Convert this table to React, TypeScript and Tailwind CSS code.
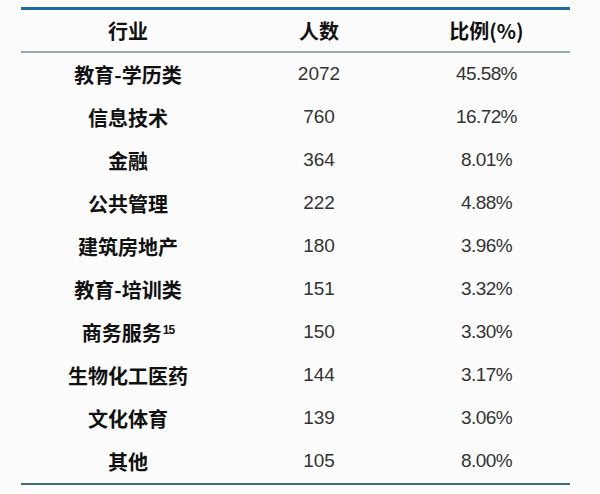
import React from "react";

const rows: [React.ReactNode, string, string][] = [
  ["教育-学历类", "2072", "45.58%"],
  ["信息技术", "760", "16.72%"],
  ["金融", "364", "8.01%"],
  ["公共管理", "222", "4.88%"],
  ["建筑房地产", "180", "3.96%"],
  ["教育-培训类", "151", "3.32%"],
  [
    <span>
      商务服务<sup className="text-[12px] font-bold relative -top-[7px] ml-[1px] tracking-[-1px]" style={{ fontFamily: '"Liberation Sans", sans-serif' }}>15</sup>
    </span>,
    "150",
    "3.30%",
  ],
  ["生物化工医药", "144", "3.17%"],
  ["文化体育", "139", "3.06%"],
  ["其他", "105", "8.00%"],
];

export default function App() {
  return (
    <div className="w-[600px] h-[494px] bg-[#fdfcfd] pt-[7px]" style={{ fontFamily: '"Noto Sans CJK SC", "Liberation Sans", sans-serif' }}>
      <div className="ml-[21px] w-[549px]">
        <div className="h-[3px] bg-[#1d6b9b]" />
        <div className="grid grid-cols-[214px_168px_167px] h-[41px] items-center text-[20px] font-bold text-[#111]">
          <div className="text-center">行业</div>
          <div className="text-center">人数</div>
          <div className="text-center">比例(%)</div>
        </div>
        <div className="h-[2px] bg-[#8fabb0]" />
        {rows.map((r, i) => (
          <div key={i} className="grid grid-cols-[214px_168px_167px] h-[43px] items-center">
            <div className="text-center text-[20px] font-bold text-[#111]">{r[0]}</div>
            <div className="text-center text-[19px] text-[#333]" style={{ fontFamily: '"Liberation Sans", sans-serif' }}>{r[1]}</div>
            <div className="text-center text-[19px] text-[#333] tracking-[-0.6px]" style={{ fontFamily: '"Liberation Sans", sans-serif' }}>{r[2]}</div>
          </div>
        ))}
        <div className="h-[2px] bg-[#3d6f73]" />
      </div>
    </div>
  );
}
